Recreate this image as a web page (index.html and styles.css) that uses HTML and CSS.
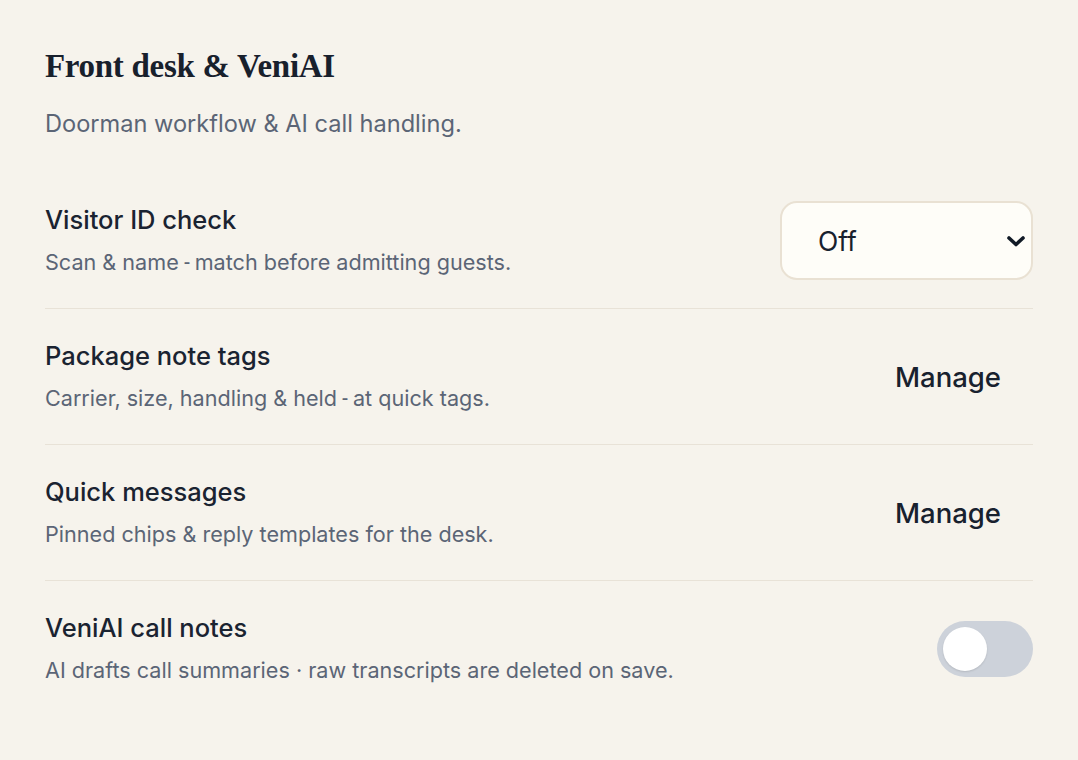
FILE: index.html
```html
<!DOCTYPE html>
<html lang="en">
<head>
<meta charset="utf-8">
<title>Front desk &amp; VeniAI</title>
<link rel="stylesheet" href="styles.css">
</head>
<body>
<main class="page">
  <h1 class="heading">Front desk &amp; VeniAI</h1>
  <p class="lead">Doorman workflow &amp; AI call handling.</p>

  <section class="settings">
    <div class="row">
      <div class="text">
        <div class="title">Visitor ID check</div>
        <div class="desc">Scan &amp; name<span class="nbh">-</span>match before admitting guests.</div>
      </div>
      <div class="select">
        <span class="select-value">Off</span>
        <svg class="chevron" width="20" height="14" viewBox="0 0 20 14" aria-hidden="true"><path d="M3 4 L10 10.5 L17 4" fill="none" stroke="#111a26" stroke-width="3.6" stroke-linecap="round" stroke-linejoin="round"/></svg>
      </div>
    </div>
    <div class="row">
      <div class="text">
        <div class="title">Package note tags</div>
        <div class="desc">Carrier, size, handling &amp; held<span class="nbh">-</span>at quick tags.</div>
      </div>
      <button class="link-btn">Manage</button>
    </div>
    <div class="row">
      <div class="text">
        <div class="title">Quick messages</div>
        <div class="desc">Pinned chips &amp; reply templates for the desk.</div>
      </div>
      <button class="link-btn">Manage</button>
    </div>
    <div class="row">
      <div class="text">
        <div class="title">VeniAI call notes</div>
        <div class="desc">AI drafts call summaries · raw transcripts are deleted on save.</div>
      </div>
      <span class="toggle"><span class="knob"></span></span>
    </div>
  </section>
</main>
</body>
</html>
```
FILE: styles.css
```css
html, body {
  margin: 0;
  padding: 0;
  background: #f6f3ec;
}
body {
  font-family: Inter, "Noto Sans", sans-serif;
  color: #18212e;
}
.page {
  padding: 44px 45px 0 45px;
}
.heading {
  margin: 0;
  font-family: "Liberation Serif", "DejaVu Serif", serif;
  font-weight: 700;
  font-size: 33px;
  line-height: 44px;
  color: #18202c;
  letter-spacing: -0.3px;
}
.lead {
  margin: 20px 0 0 0;
  font-size: 23.6px;
  line-height: 32px;
  color: #5b6576;
}
.settings {
  margin-top: 33px;
}
.row {
  display: flex;
  align-items: center;
  justify-content: space-between;
  height: 135px;
  border-bottom: 1px solid #e8e2d7;
}
.row:last-child {
  border-bottom: none;
}
.text {
  display: flex;
  flex-direction: column;
  gap: 13px;
}
.title {
  font-size: 25.5px;
  font-weight: 500;
  line-height: 30px;
  color: #1a2331;
}
.desc {
  font-size: 21.6px;
  line-height: 28px;
  color: #5b6576;
}
.nbh {
  display: inline-block;
  padding: 0 3px;
  transform: scaleX(0.7);
}
.select {
  box-sizing: border-box;
  width: 253px;
  height: 79px;
  border: 2px solid #e9e1d3;
  border-radius: 17px;
  background: #fefdf8;
  display: flex;
  align-items: center;
  justify-content: space-between;
  padding: 0 5px 0 36px;
}
.select-value {
  font-size: 26.5px;
  color: #18212e;
}
.chevron {
  display: block;
}
.link-btn {
  background: none;
  border: none;
  font-family: Inter, "Noto Sans", sans-serif;
  font-size: 27.5px;
  font-weight: 500;
  color: #18212e;
  padding: 10px 32px;
  cursor: pointer;
}
.toggle {
  box-sizing: border-box;
  width: 96px;
  height: 56px;
  border-radius: 28px;
  background: #cdd2da;
  padding: 6px;
  display: flex;
  align-items: center;
}
.knob {
  width: 44px;
  height: 44px;
  border-radius: 50%;
  background: #ffffff;
  box-shadow: 0 1px 2px rgba(0,0,0,0.12);
}
```
